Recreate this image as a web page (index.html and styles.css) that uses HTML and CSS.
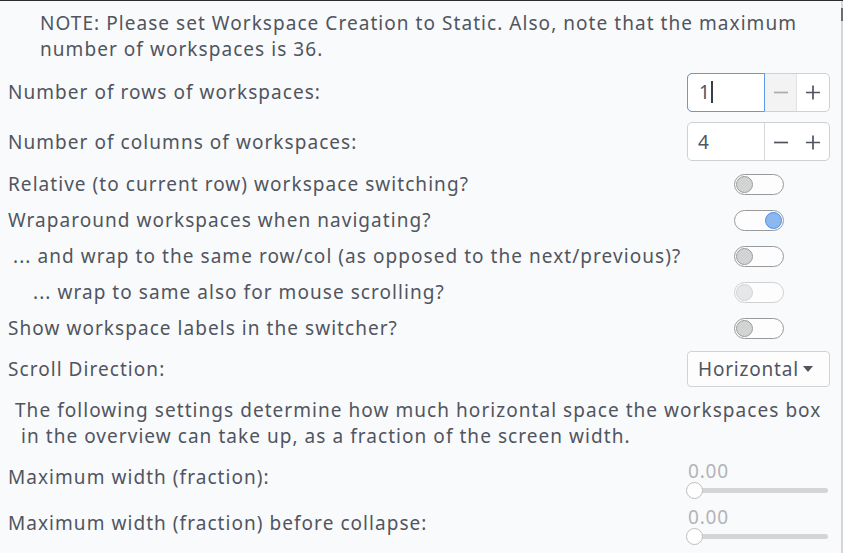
FILE: index.html
```html
<!DOCTYPE html>
<html>
<head>
<meta charset="utf-8">
<link rel="stylesheet" href="styles.css">
</head>
<body>
<div class="window">
  <div class="content">
    <p class="note">NOTE: Please set Workspace Creation to Static. Also, note that the maximum<br>number of workspaces is 36.</p>

    <div class="row row-spin1">
      <span class="label">Number of rows of workspaces:</span>
      <div class="col">
        <div class="spin">
          <div class="entry focused"><span>1</span><span class="caret"></span></div>
          <div class="btn btn-minus disabled"><svg width="16" height="16" viewBox="0 0 16 16"><path d="M1 8.5H15" /></svg></div>
          <div class="btn"><svg width="16" height="16" viewBox="0 0 16 16"><path d="M1 8.5H15M8 1.5V15.5" /></svg></div>
        </div>
      </div>
    </div>

    <div class="row row-spin2">
      <span class="label">Number of columns of workspaces:</span>
      <div class="col">
        <div class="spin">
          <div class="entry"><span>4</span></div>
          <div class="btn"><svg width="16" height="16" viewBox="0 0 16 16"><path d="M1 8.5H15" /></svg></div>
          <div class="btn"><svg width="16" height="16" viewBox="0 0 16 16"><path d="M1 8.5H15M8 1.5V15.5" /></svg></div>
        </div>
      </div>
    </div>

    <div class="switches">
      <div class="row row-switch">
        <span class="label">Relative (to current row) workspace switching?</span>
        <div class="col center"><div class="switch"><span class="knob"></span></div></div>
      </div>
      <div class="row row-switch">
        <span class="label">Wraparound workspaces when navigating?</span>
        <div class="col center"><div class="switch on"><span class="knob"></span></div></div>
      </div>
      <div class="row row-switch">
        <span class="label indent1">... and wrap to the same row/col (as opposed to the next/previous)?</span>
        <div class="col center"><div class="switch"><span class="knob"></span></div></div>
      </div>
      <div class="row row-switch">
        <span class="label indent2">... wrap to same also for mouse scrolling?</span>
        <div class="col center"><div class="switch disabled"><span class="knob"></span></div></div>
      </div>
      <div class="row row-switch">
        <span class="label">Show workspace labels in the switcher?</span>
        <div class="col center"><div class="switch"><span class="knob"></span></div></div>
      </div>
    </div>

    <div class="row row-combo">
      <span class="label">Scroll Direction:</span>
      <div class="col">
        <div class="combo"><span>Horizontal</span><svg class="arrow" width="10" height="6" viewBox="0 0 10 6"><path d="M0 0H10L5 6Z"/></svg></div>
      </div>
    </div>

    <p class="para">The following settings determine how much horizontal space the workspaces box<br>&nbsp;in the overview can take up, as a fraction of the screen width.</p>

    <div class="row row-slider">
      <span class="label">Maximum width (fraction):</span>
      <div class="col slider-col">
        <span class="value">0.00</span>
        <div class="slider"><span class="track"></span><span class="handle"></span></div>
      </div>
    </div>

    <div class="row row-slider">
      <span class="label">Maximum width (fraction) before collapse:</span>
      <div class="col slider-col">
        <span class="value">0.00</span>
        <div class="slider"><span class="track"></span><span class="handle"></span></div>
      </div>
    </div>
  </div>
  <div class="scrollbar"><div class="thumb"></div></div>
</div>
</body>
</html>
```

FILE: styles.css
```css
html, body {
  margin: 0;
  padding: 0;
}

body {
  width: 843px;
  height: 553px;
  overflow: hidden;
  background: #f9fafb;
  color: #50555f;
  font-family: "Noto Sans", "Open Sans", sans-serif;
  font-size: 19px;
  letter-spacing: 1.05px;
  border-top: 1px solid #2c2c2e;
  box-sizing: border-box;
}

.window {
  display: flex;
  height: 552px;
}

.content {
  flex: 1;
  padding: 9px 11px 0 8px;
}

.note {
  margin: 0 0 0 32px;
  line-height: 26px;
  height: 52px;
  white-space: nowrap;
}

.row {
  display: flex;
  align-items: center;
  justify-content: space-between;
}

.label {
  white-space: nowrap;
}

.indent1 {
  padding-left: 5px;
}

.indent2 {
  padding-left: 25px;
}

.col {
  width: 143px;
  flex-shrink: 0;
  display: flex;
}

.col.center {
  justify-content: center;
}

.row-spin1 {
  height: 60px;
}

.row-spin2 {
  height: 39px;
}

.spin {
  display: flex;
  width: 143px;
  height: 39px;
  box-sizing: border-box;
  border: 1px solid #d0d0d2;
  border-radius: 5px;
  background: #ffffff;
}

.entry {
  width: 78px;
  display: flex;
  align-items: center;
  padding-left: 10px;
  box-sizing: border-box;
  border-right: 1px solid #d6d6d8;
}

.entry.focused {
  margin: -1px 0 -1px -1px;
  width: 79px;
  padding-left: 11px;
  border: 1px solid #5c9ce6;
  border-radius: 5px 0 0 5px;
}

.caret {
  display: inline-block;
  width: 2px;
  height: 22px;
  background: #3a3d44;
  margin-left: 0;
}

.btn {
  width: 32px;
  display: flex;
  align-items: center;
  justify-content: center;
}

.btn svg path {
  stroke: #50555f;
  stroke-width: 1.7;
  fill: none;
}

.btn.disabled {
  background: #f3f3f4;
  border-right: 1px solid #e2e2e4;
}

.btn.disabled svg path {
  stroke: #a9abb0;
}

.switches {
  margin-top: 5px;
}

.row-switch {
  height: 36px;
}

.switch {
  width: 50px;
  height: 21px;
  box-sizing: border-box;
  border: 1px solid #999a9c;
  border-radius: 11px;
  background: #fdfdfd;
  display: flex;
  align-items: center;
  padding: 0 1px;
}

.switch .knob {
  width: 17px;
  height: 17px;
  box-sizing: border-box;
  border-radius: 50%;
  background: #d2d3d3;
  border: 1px solid #9a9b9d;
}

.switch.on {
  justify-content: flex-end;
}

.switch.on .knob {
  background: #8db7f0;
  border-color: #4f8fe0;
}

.switch.disabled {
  border-color: #cfd0d2;
}

.switch.disabled .knob {
  background: #e6e7e8;
  border-color: #d2d3d5;
}

.row-combo {
  height: 46px;
}

.combo {
  width: 144px;
  height: 36px;
  box-sizing: border-box;
  border: 1px solid #d3d3d5;
  border-radius: 4px;
  background: #fdfdfd;
  display: flex;
  align-items: center;
  gap: 4px;
  padding: 0 10px 0 10px;
  letter-spacing: 0.8px;
}

.combo .arrow path {
  fill: #50555f;
}

.para {
  margin: 5px 0 5px 7px;
  line-height: 26px;
  height: 52px;
  white-space: nowrap;
}

.row-slider {
  height: 46px;
}

.slider-col {
  flex-direction: column;
  padding-top: 4px;
}

.value {
  color: #b3b4b9;
  line-height: 22px;
  padding-left: 1px;
  letter-spacing: 0.8px;
}

.slider {
  position: relative;
  height: 17px;
  display: flex;
  align-items: center;
  padding: 0 2px 0 3px;
}

.track {
  flex: 1;
  height: 5px;
  border-radius: 3px;
  background: #d4d5d6;
}

.handle {
  position: absolute;
  left: -1px;
  top: 0;
  width: 17px;
  height: 17px;
  box-sizing: border-box;
  border-radius: 50%;
  background: #ffffff;
  border: 1px solid #bdbec0;
}

.scrollbar {
  width: 2px;
  background: #d6d6d8;
  position: relative;
}

.thumb {
  margin-top: 7px;
  height: 13px;
  background: #6d6e72;
}
```
